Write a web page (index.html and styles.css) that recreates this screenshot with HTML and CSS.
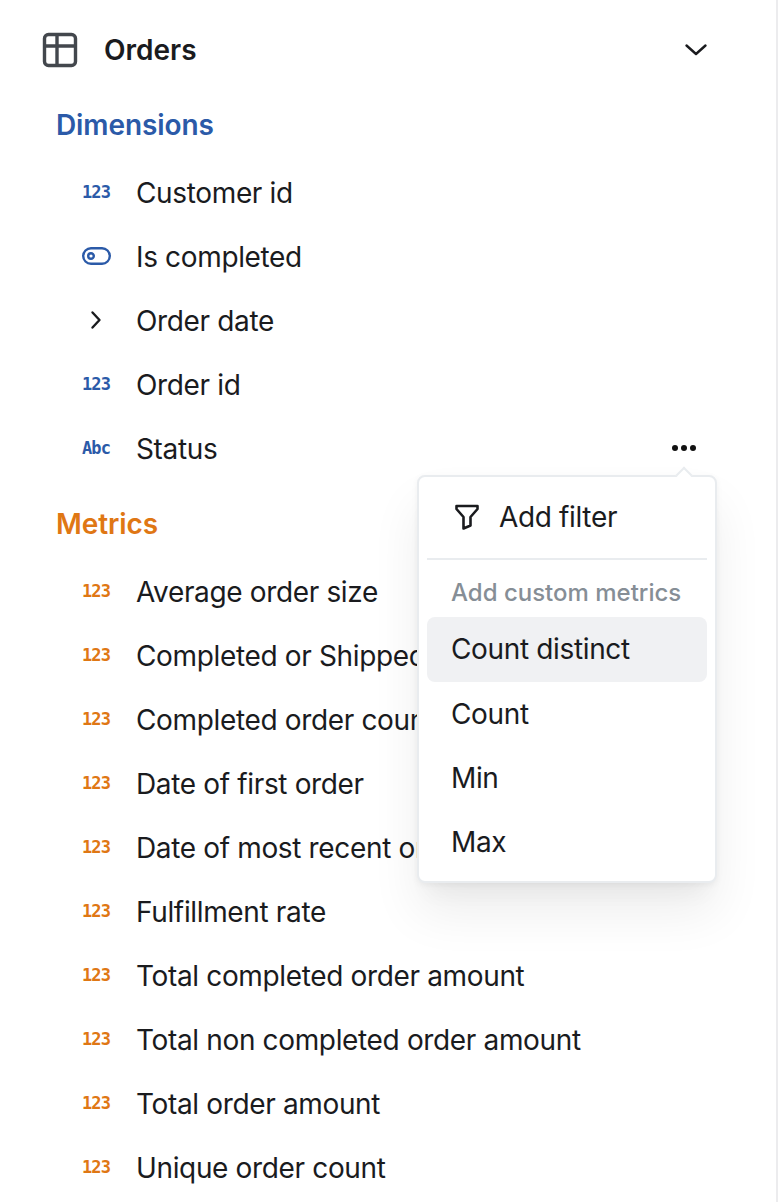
FILE: index.html
```html
<!DOCTYPE html>
<html>
<head>
  <title>Orders</title>
  <link rel="stylesheet" href="styles.css">
</head>
<body>

<div class="panel">
  <div class="table-head">
    <svg class="table-icon" viewBox="0 0 36 36" fill="none" stroke="#43474d" stroke-width="3.4" stroke-linejoin="round">
      <rect x="2.5" y="2.5" width="31" height="31" rx="4"/>
      <path d="M2.5 14H33.5M15 2.5V33.5"/>
    </svg>
    <span class="table-name">Orders</span>
    <svg class="chevron-down" viewBox="0 0 24 14" fill="none" stroke="#1a1b1e" stroke-width="2.4" stroke-linecap="round" stroke-linejoin="round">
      <path d="M2.5 2.5L12 11L21.5 2.5"/>
    </svg>
  </div>

  <h3 class="group-title dim">Dimensions</h3>
  <div class="row"><span class="type dim">123</span><span class="label">Customer id</span></div>
  <div class="row">
    <span class="type">
      <svg class="toggle" viewBox="0 0 29 18" fill="none" stroke="#2b5aa8" stroke-width="2.4">
        <rect x="1.2" y="1.2" width="26.6" height="15.6" rx="7.8"/>
        <circle cx="9" cy="9" r="2.8"/>
      </svg>
    </span>
    <span class="label">Is completed</span>
  </div>
  <div class="row">
    <span class="type">
      <svg class="chevron-right" viewBox="0 0 12 20" fill="none" stroke="#1a1b1e" stroke-width="2.4" stroke-linecap="round" stroke-linejoin="round">
        <path d="M2.5 2.5L9.5 10L2.5 17.5"/>
      </svg>
    </span>
    <span class="label">Order date</span>
  </div>
  <div class="row"><span class="type dim">123</span><span class="label">Order id</span></div>
  <div class="row"><span class="type dim">Abc</span><span class="label">Status</span><span class="dots"><i></i><i></i><i></i></span></div>

  <h3 class="group-title metric">Metrics</h3>
  <div class="row"><span class="type metric">123</span><span class="label">Average order size</span></div>
  <div class="row"><span class="type metric">123</span><span class="label">Completed or Shipped order count</span></div>
  <div class="row"><span class="type metric">123</span><span class="label">Completed order count</span></div>
  <div class="row"><span class="type metric">123</span><span class="label">Date of first order</span></div>
  <div class="row"><span class="type metric">123</span><span class="label">Date of most recent order</span></div>
  <div class="row"><span class="type metric">123</span><span class="label">Fulfillment rate</span></div>
  <div class="row"><span class="type metric">123</span><span class="label">Total completed order amount</span></div>
  <div class="row"><span class="type metric">123</span><span class="label">Total non completed order amount</span></div>
  <div class="row"><span class="type metric">123</span><span class="label">Total order amount</span></div>
  <div class="row"><span class="type metric">123</span><span class="label">Unique order count</span></div>
</div>

<div class="menu">
  <div class="menu-arrow"></div>
  <div class="menu-item filter-item">
    <svg class="filter-icon" viewBox="0 0 24 26" fill="none" stroke="#1a1b1e" stroke-width="2.6" stroke-linejoin="round" stroke-linecap="round">
      <path d="M1.5 2H22.5V5L15.5 13V21.5L8.5 24.5V13L1.5 5Z"/>
    </svg>
    <span>Add filter</span>
  </div>
  <div class="menu-divider"></div>
  <div class="menu-label">Add custom metrics</div>
  <div class="menu-item active">Count distinct</div>
  <div class="menu-item">Count</div>
  <div class="menu-item">Min</div>
  <div class="menu-item">Max</div>
</div>

</body>
</html>
```

FILE: styles.css
```css
html, body {
  margin: 0;
  height: 1202px;
  overflow: hidden;
  background: #fff;
}

body {
  font-family: Inter, "Liberation Sans", sans-serif;
  color: #1a1b1e;
  position: relative;
}

.panel {
  width: 778px;
  height: 1202px;
  box-sizing: border-box;
  border-right: 2px solid #ececee;
  overflow: hidden;
}

.table-head {
  display: flex;
  align-items: center;
  height: 36px;
  padding: 32px 68px 0 42px;
}

.table-icon {
  width: 36px;
  height: 36px;
  margin-right: 26px;
}

.table-name {
  font-size: 28px;
  font-weight: 600;
  flex: 1;
}

.chevron-down {
  width: 24px;
  height: 14px;
}

.group-title {
  margin: 0;
  padding-left: 56px;
  font-size: 28px;
  font-weight: 600;
  letter-spacing: -0.1px;
  line-height: 40px;
}

.group-title.dim { margin-top: 37px; margin-bottom: 16px; }
.group-title.metric { margin-top: 23px; margin-bottom: 16px; }

.dim { color: #2b5aa8; }
.metric { color: #df7714; }

.row {
  display: flex;
  align-items: center;
  height: 64px;
  padding: 0 80px 0 82px;
}

.type {
  width: 54px;
  flex: none;
  font-family: "DejaVu Sans Mono", monospace;
  font-size: 17px;
  font-weight: 700;
  letter-spacing: -0.9px;
  line-height: 1;
  position: relative;
  top: -1px;
}

.toggle {
  display: block;
  width: 29px;
  height: 18px;
}

.chevron-right {
  display: block;
  width: 12px;
  height: 20px;
  margin-left: 8px;
}

.label {
  font-size: 28px;
  letter-spacing: -0.35px;
  white-space: nowrap;
  flex: 1;
}

.dots {
  display: flex;
  gap: 3px;
  margin-bottom: 2px;
}

.dots i {
  width: 6px;
  height: 6px;
  border-radius: 50%;
  background: #111;
}

.menu {
  position: absolute;
  left: 417px;
  top: 475px;
  width: 300px;
  box-sizing: border-box;
  padding: 8px 8px 7px;
  background: #fff;
  border: 2px solid #e9ecef;
  border-radius: 8px;
  box-shadow: 0 2px 6px rgba(0, 0, 0, .05), 0 30px 50px rgba(0, 0, 0, .07), 0 20px 20px -10px rgba(0, 0, 0, .04);
  font-size: 28px;
  letter-spacing: -0.35px;
}

.menu-arrow {
  position: absolute;
  left: 259px;
  top: -8px;
  width: 12px;
  height: 12px;
  box-sizing: border-box;
  background: #fff;
  border-top: 2px solid #e9ecef;
  border-left: 2px solid #e9ecef;
  transform: rotate(45deg);
}

.menu-item {
  display: flex;
  align-items: center;
  height: 64.3px;
  padding: 0 24px;
  border-radius: 8px;
}

.menu-item.active { background: #f0f1f3; }

.filter-item {
  gap: 20px;
  padding-left: 28px;
}

.filter-icon {
  width: 24px;
  height: 26px;
  flex: none;
}

.menu-divider {
  height: 2px;
  background: #e9ecef;
  margin: 9px 0 0;
}

.menu-label {
  padding: 13px 24px 4px;
  font-size: 24px;
  font-weight: 500;
  letter-spacing: 0;
  line-height: 40px;
  color: #868e96;
}
```
